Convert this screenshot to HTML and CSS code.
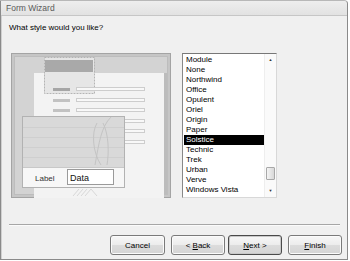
FILE: index.html
```html
<!DOCTYPE html>
<html lang="en">
<head>
  <meta charset="UTF-8" />
  <title>Form Wizard</title>
  <link rel="stylesheet" href="styles.css">
</head>
<body>
  <div class="window">
    <div class="titlebar">Form Wizard</div>
    <div class="content">
      <div class="prompt">What style would you like?</div>

      <div class="main">
        <div class="preview">
          <svg width="160" height="145" viewBox="0 0 160 145">
            <rect x="0.5" y="0.5" width="159" height="144" fill="#c6c6c6" stroke="#a4a4a4"/>
            <rect x="3.5" y="3.5" width="153" height="138" fill="#d3d3d3" stroke="#bdbdbd"/>
            <!-- back form -->
            <rect x="23" y="20" width="130" height="125" fill="#f3f3f3"/>
            <rect x="153" y="20" width="3" height="121" fill="#bcbcbc"/>
            <rect x="33" y="4" width="50" height="36" fill="#e6e6e6"/>
            <rect x="34" y="7" width="48" height="12" fill="#a9a9a9"/>
            <rect x="33.5" y="4.5" width="50" height="36" fill="none" stroke="#b4b4b4" stroke-dasharray="2 1"/>
            <g fill="#f8f8f8" stroke="#cdcdcd">
              <rect x="65.5" y="34.5" width="68" height="3"/>
              <rect x="65.5" y="45.5" width="68" height="3"/>
              <rect x="65.5" y="55.5" width="68" height="3"/>
              <rect x="65.5" y="66.5" width="68" height="3"/>
              <rect x="65.5" y="76.5" width="68" height="3"/>
              <rect x="65.5" y="87.5" width="68" height="3"/>
            </g>
            <rect x="42" y="35" width="17" height="3" fill="#a6a6a6"/>
            <rect x="42" y="46" width="17" height="3" fill="#c2c2c2"/>
            <rect x="42" y="56" width="17" height="3" fill="#c2c2c2"/>
            <!-- front form -->
            <rect x="11.5" y="63.5" width="102" height="71" fill="#d9d9d9" stroke="#b2b2b2"/>
            <g stroke="#cfcfcf">
              <line x1="12" y1="74.5" x2="113" y2="74.5"/>
              <line x1="12" y1="84.5" x2="113" y2="84.5"/>
              <line x1="12" y1="94.5" x2="113" y2="94.5"/>
              <line x1="12" y1="104.5" x2="113" y2="104.5"/>
            </g>
            <g fill="none" stroke="#c4c4c4">
              <path d="M86 70 C80 80 82 100 90 112"/>
              <path d="M92 70 C98 82 98 100 96 112"/>
              <path d="M84 112 C88 90 90 74 100 64"/>
            </g>
            <rect x="12" y="114" width="101" height="20" fill="#f7f7f7"/>
            <line x1="12" y1="114.5" x2="113" y2="114.5" stroke="#c8c8c8"/>
            <text x="24" y="128" class="svg-label">Label</text>
            <rect x="56.5" y="116.5" width="46" height="15" fill="#ffffff" stroke="#9a9a9a"/>
            <text x="59" y="128" class="svg-data">Data</text>
            <g stroke="#d8d8d8">
              <line x1="62" y1="143" x2="68" y2="136"/>
              <line x1="66" y1="143" x2="72" y2="136"/>
              <line x1="70" y1="143" x2="76" y2="136"/>
              <line x1="74" y1="143" x2="80" y2="136"/>
              <line x1="80" y1="136" x2="86" y2="143"/>
            </g>
          </svg>
        </div>

        <div class="listbox">
          <div class="items">
            <div class="item">Module</div>
            <div class="item">None</div>
            <div class="item">Northwind</div>
            <div class="item">Office</div>
            <div class="item">Opulent</div>
            <div class="item">Oriel</div>
            <div class="item">Origin</div>
            <div class="item">Paper</div>
            <div class="item selected">Solstice</div>
            <div class="item">Technic</div>
            <div class="item">Trek</div>
            <div class="item">Urban</div>
            <div class="item">Verve</div>
            <div class="item">Windows Vista</div>
          </div>
          <div class="scrollbar">
            <div class="arrow">&#9650;</div>
            <div class="track"><div class="thumb"></div></div>
            <div class="arrow">&#9660;</div>
          </div>
        </div>
      </div>

      <div class="sep"></div>

      <div class="buttons">
        <button class="btn cancel">Cancel</button>
        <button class="btn">&lt; <u>B</u>ack</button>
        <button class="btn default"><u>N</u>ext &gt;</button>
        <button class="btn finish"><u>F</u>inish</button>
      </div>
    </div>
  </div>
</body>
</html>
```
FILE: styles.css
```css
body {
  margin: 0;
  background: #ffffff;
  font-family: "Liberation Sans", Arial, sans-serif;
  font-size: 8px;
  color: #000;
}

.window {
  width: 346px;
  height: 258px;
  background: #f0f0f0;
  border: 1px solid #8a8a8a;
  border-top-color: #b8b8b8;
  border-radius: 0 4px 0 0;
  box-shadow: inset 1px 0 0 #d0d0d0;
  display: flex;
  flex-direction: column;
}

.titlebar {
  height: 14px;
  line-height: 15px;
  padding-left: 5px;
  font-size: 8.5px;
  color: #5a5a5a;
  background: linear-gradient(#eeeeee, #e2e2e2);
  border-bottom: 1px solid #c6c6c6;
  border-radius: 0 4px 0 0;
}

.content {
  flex: 1;
  padding: 0 5px 0 8px;
}

.prompt {
  margin-top: 6px;
  line-height: 12px;
}

.main {
  display: flex;
  gap: 11px;
  margin-top: 19px;
  padding-left: 2px;
  height: 145px;
}

.preview svg {
  display: block;
}

.svg-label,
.svg-data {
  font-family: "Liberation Sans", Arial, sans-serif;
  font-size: 8px;
  fill: #333;
}

.svg-data {
  font-size: 9px;
  fill: #111;
}

.listbox {
  width: 93px;
  height: 143px;
  display: flex;
  background: #ffffff;
  border: 1px solid #d8d8d8;
  border-top: 1px solid #777777;
  border-left: 1px solid #888888;
}

.items {
  flex: 1;
  padding-top: 1px;
}

.item {
  height: 10px;
  line-height: 10px;
  padding-left: 3px;
  white-space: nowrap;
}

.item.selected {
  background: #000000;
  color: #ffffff;
  margin-left: 1px;
  padding-left: 2px;
}

.scrollbar {
  width: 11px;
  display: flex;
  flex-direction: column;
  background: #fafafa;
  border-left: 1px solid #eeeeee;
}

.arrow {
  height: 12px;
  line-height: 12px;
  text-align: center;
  font-size: 4px;
  color: #333;
}

.track {
  flex: 1;
  display: flex;
  flex-direction: column;
  justify-content: flex-end;
  padding-bottom: 5px;
}

.thumb {
  height: 13px;
  margin: 0 0 0 1px;
  width: 9px;
  background: linear-gradient(90deg, #f4f4f4, #d8d8d8);
  border: 1px solid #a8a8a8;
  border-radius: 1px;
  box-sizing: border-box;
}

.sep {
  margin-top: 26px;
  height: 1px;
  background: #a6a6a6;
  border-bottom: 1px solid #fbfbfb;
  margin-right: 2px;
}

.buttons {
  display: flex;
  justify-content: flex-end;
  gap: 3px;
  margin-top: 9px;
}

.btn {
  width: 54px;
  height: 20px;
  padding: 0;
  font-family: "Liberation Sans", Arial, sans-serif;
  font-size: 8px;
  color: #000;
  background: linear-gradient(#f7f7f7 0%, #ececec 50%, #dcdcdc 51%, #d4d4d4 100%);
  border: 1px solid #7a7a7a;
  border-radius: 3px;
  box-shadow: inset 0 0 0 1px #fbfbfb;
}

.btn.cancel {
  width: 55px;
  margin-right: 3px;
}

.btn.default {
  border-color: #4a4a4a;
  box-shadow: inset 0 0 0 1px #c8c8c8;
}

.btn.finish {
  margin-left: 3px;
}
```
